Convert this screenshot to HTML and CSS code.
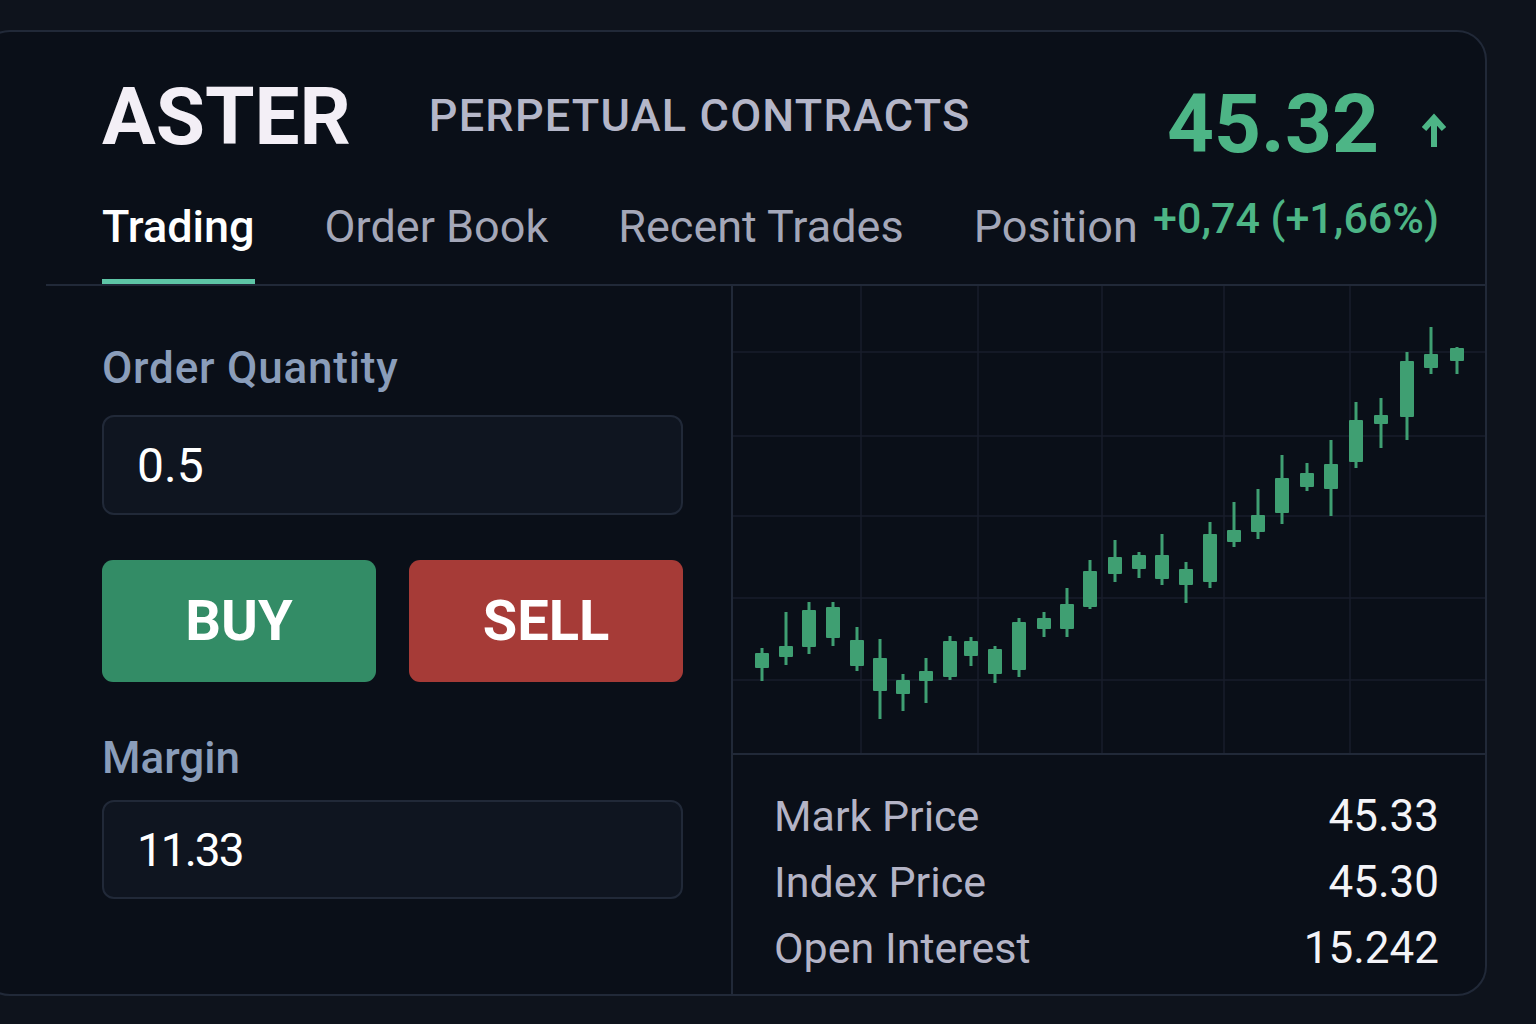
FILE: index.html
```html
<!DOCTYPE html>
<html lang="en">
<head>
  <meta charset="UTF-8" />
  <meta name="viewport" content="width=device-width, initial-scale=1.0"/>
  <title>ASTER – Perpetual Contracts</title>
  <link rel="stylesheet" href="styles.css">
</head>
<body>
  <div class="panel">
    <header class="top">
      <div class="head">
        <h1 class="brand">ASTER</h1>
        <span class="subtitle">PERPETUAL CONTRACTS</span>
        <div class="price">
          <span class="last">45.32</span>
          <svg class="arrow" width="30" height="36" viewBox="0 0 30 36">
            <path d="M15 35V7M5 17L15 6L25 17" fill="none" stroke="#4db586" stroke-width="6"/>
          </svg>
        </div>
      </div>
      <nav class="tabs">
        <a class="tab active">Trading</a>
        <a class="tab">Order Book</a>
        <a class="tab">Recent Trades</a>
        <a class="tab">Position</a>
        <span class="change">+0,74 (+1,66%)</span>
      </nav>
    </header>

    <main class="body">
      <section class="order">
        <label class="label first">Order Quantity</label>
        <div class="field">0.5</div>
        <div class="actions">
          <button class="btn buy">BUY</button>
          <button class="btn sell">SELL</button>
        </div>
        <label class="label second">Margin</label>
        <div class="field field-margin">11.33</div>
      </section>

      <section class="market">
        <div class="chart">
          <svg id="candles" width="752" height="467" viewBox="733 286 752 467"></svg>
        </div>
        <div class="stats">
          <div class="row"><span>Mark Price</span><span class="val">45.33</span></div>
          <div class="row"><span>Index Price</span><span class="val">45.30</span></div>
          <div class="row"><span>Open Interest</span><span class="val">15.242</span></div>
        </div>
      </section>
    </main>
  </div>

  <script>
    // x, wick top, wick bottom, body top, body bottom
    const candles = [
      [762, 648, 681, 653, 668], [786, 612, 665, 646, 657], [809, 602, 654, 610, 647],
      [833, 602, 646, 607, 638], [857, 627, 671, 640, 666], [880, 639, 719, 658, 691],
      [903, 674, 711, 680, 694], [926, 658, 703, 671, 681], [950, 636, 680, 641, 677],
      [971, 637, 666, 641, 656], [995, 646, 683, 649, 674], [1019, 618, 677, 622, 670],
      [1044, 612, 637, 618, 629], [1067, 588, 637, 604, 629], [1090, 560, 609, 571, 607],
      [1115, 540, 582, 557, 574], [1139, 552, 578, 555, 569], [1162, 534, 585, 555, 579],
      [1186, 562, 603, 569, 585], [1210, 522, 588, 534, 582], [1234, 502, 547, 530, 542],
      [1258, 489, 539, 515, 532], [1282, 455, 524, 478, 513], [1307, 463, 491, 473, 487],
      [1331, 440, 516, 464, 489], [1356, 402, 468, 420, 462], [1381, 398, 448, 415, 424],
      [1407, 352, 440, 361, 417], [1431, 327, 374, 354, 368], [1457, 347, 374, 348, 361]
    ];

    const svg = document.getElementById("candles");
    let out = "";

    [352, 436, 516, 598, 680].forEach(y => {
      out += `<line class="grid" x1="733" x2="1485" y1="${y}" y2="${y}"/>`;
    });
    [861, 978, 1102, 1224, 1350].forEach(x => {
      out += `<line class="grid" x1="${x}" x2="${x}" y1="286" y2="753"/>`;
    });

    candles.forEach(([x, hi, lo, top, bottom]) => {
      out += `<rect class="wick" x="${x - 1.5}" y="${hi}" width="3" height="${lo - hi}"/>`;
      out += `<rect class="body-c" x="${x - 7}" y="${top}" width="14" height="${bottom - top}" rx="1"/>`;
    });

    svg.innerHTML = out;
  </script>
</body>
</html>
```

FILE: styles.css
```css
:root {
  --bg: #0e131c;
  --panel: #0a0f18;
  --line: #212938;
  --grid: #181e2b;
  --green: #4db586;
  --candle: #3f9f72;
  --muted: #a4a7b8;
  --label: #8a9dba;
}

* {
  box-sizing: border-box;
}

body {
  margin: 0;
  padding-top: 30px;
  height: 1024px;
  overflow: hidden;
  background-color: var(--bg);
  color: #fff;
  font-family: Roboto, "Liberation Sans", sans-serif;
}

.panel {
  margin-left: -20px;
  width: 1507px;
  height: 966px;
  border: 2px solid var(--line);
  border-radius: 30px;
  background-color: var(--panel);
  display: flex;
  flex-direction: column;
  overflow: hidden;
}

/* Kopfbereich */
.top {
  margin-left: 64px;
  padding: 45px 36px 0 56px;
  border-bottom: 2px solid var(--line);
  flex-shrink: 0;
}

.head {
  display: flex;
  align-items: flex-start;
  height: 91px;
  white-space: nowrap;
}

.brand {
  margin: 0;
  font-size: 80px;
  line-height: 1;
  font-weight: 700;
  color: #f3eff6;
}

.subtitle {
  margin: 16px 0 0 78px;
  font-size: 45px;
  line-height: 1;
  font-weight: 500;
  letter-spacing: 1.2px;
  color: #b4b6c8;
}

.price {
  margin-left: auto;
  display: flex;
  align-items: flex-start;
  margin-top: 6px;
}

.last {
  font-size: 82px;
  line-height: 1;
  font-weight: 700;
  color: var(--green);
}

.arrow {
  margin: 29px 0 0 40px;
}

.tabs {
  display: flex;
  align-items: flex-start;
  margin-top: 36px;
  white-space: nowrap;
}

.tab {
  flex-shrink: 0;
  font-size: 45px;
  line-height: 1;
  color: var(--muted);
  padding-bottom: 30px;
  border-bottom: 5px solid transparent;
  cursor: pointer;
}

.tab + .tab {
  margin-left: 70px;
}

.tab.active {
  color: #fff;
  font-weight: 500;
  border-bottom-color: #5ec5a6;
}

.change {
  flex-shrink: 0;
  margin: -7px 10px 0 auto;
  font-size: 43px;
  line-height: 1;
  font-weight: 500;
  color: var(--green);
}

/* Inhalt */
.body {
  flex: 1;
  display: grid;
  grid-template-columns: 749px 1fr;
  min-height: 0;
}

.order {
  padding: 60px 48px 0 120px;
  display: flex;
  flex-direction: column;
}

.label {
  font-size: 44px;
  line-height: 1;
  font-weight: 500;
  color: var(--label);
}

.label.first {
  letter-spacing: 0.8px;
}

.label.second {
  margin-top: 54px;
}

.field {
  margin-top: 25px;
  height: 100px;
  border: 2px solid var(--line);
  border-radius: 12px;
  background-color: #0f1520;
  display: flex;
  align-items: center;
  padding-left: 33px;
  font-size: 48px;
  color: #fff;
}

.field-margin {
  margin-top: 20px;
  height: 99px;
  font-size: 46px;
  letter-spacing: -2px;
}

.actions {
  margin-top: 45px;
  display: grid;
  grid-template-columns: 1fr 1fr;
  gap: 33px;
}

.btn {
  height: 122px;
  border: none;
  border-radius: 11px;
  font-family: inherit;
  font-size: 56px;
  font-weight: 700;
  color: #fff;
  cursor: pointer;
}

.buy {
  background-color: #338c66;
}

.sell {
  background-color: #a63b37;
}

.market {
  border-left: 2px solid var(--line);
  display: flex;
  flex-direction: column;
}

.chart {
  height: 469px;
  border-bottom: 2px solid var(--line);
}

.chart svg {
  display: block;
}

.grid {
  stroke: var(--grid);
  stroke-width: 1.5;
}

.wick,
.body-c {
  fill: var(--candle);
}

.stats {
  padding: 28px 46px 0 41px;
}

.row {
  display: flex;
  justify-content: space-between;
  font-size: 43px;
  line-height: 66px;
  color: #b4b4c6;
}

.val {
  font-size: 44px;
  color: #f4f4f8;
}
```
